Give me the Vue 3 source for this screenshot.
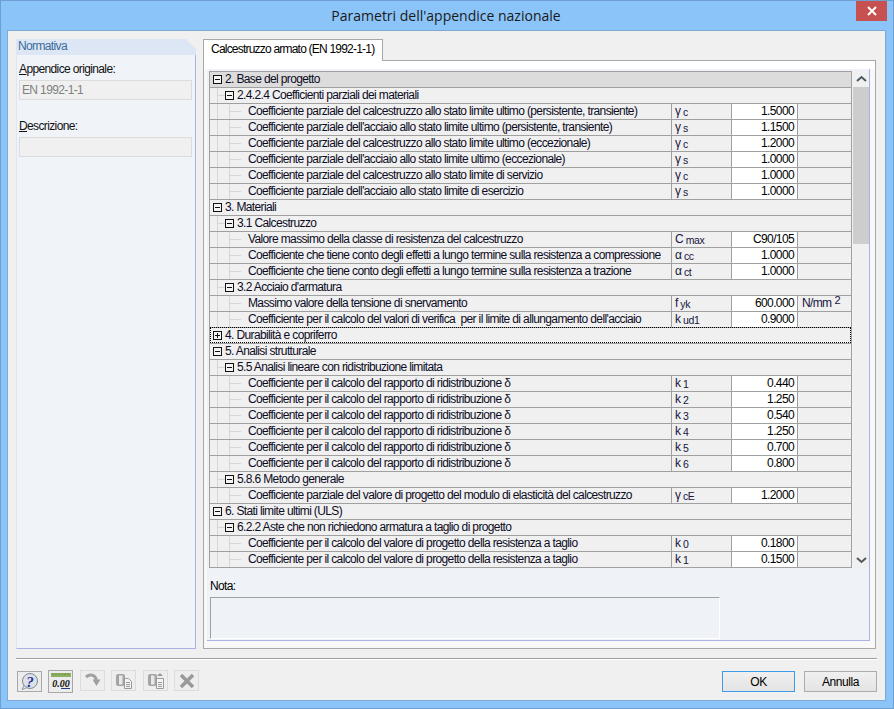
<script setup>
const h0 = (t, o = {}) => ({ lvl: 0, t, ...o })
const h1 = (t) => ({ lvl: 1, t })
const c = (t, s, sub, v, u) => ({ lvl: 2, t, s, sub, v, u })
const rd = 'Coefficiente per il calcolo del rapporto di ridistribuzione δ'
const vr = 'Coefficiente per il calcolo del valore di progetto della resistenza a taglio'
const rows = [
  h0('2. Base del progetto', { dark: true }),
  h1('2.4.2.4 Coefficienti parziali dei materiali'),
  c('Coefficiente parziale del calcestruzzo allo stato limite ultimo (persistente, transiente)', 'γ', 'c', '1.5000'),
  c("Coefficiente parziale dell'acciaio allo stato limite ultimo (persistente, transiente)", 'γ', 's', '1.1500'),
  c('Coefficiente parziale del calcestruzzo allo stato limite ultimo (eccezionale)', 'γ', 'c', '1.2000'),
  c("Coefficiente parziale dell'acciaio allo stato limite ultimo (eccezionale)", 'γ', 's', '1.0000'),
  c('Coefficiente parziale del calcestruzzo allo stato limite di servizio', 'γ', 'c', '1.0000'),
  c("Coefficiente parziale dell'acciaio allo stato limite di esercizio", 'γ', 's', '1.0000'),
  h0('3. Materiali'),
  h1('3.1 Calcestruzzo'),
  c('Valore massimo della classe di resistenza del calcestruzzo', 'C', 'max', 'C90/105'),
  c('Coefficiente che tiene conto degli effetti a lungo termine sulla resistenza a compressione', 'α', 'cc', '1.0000'),
  c('Coefficiente che tiene conto degli effetti a lungo termine sulla resistenza a trazione', 'α', 'ct', '1.0000'),
  h1("3.2 Acciaio d'armatura"),
  c('Massimo valore della tensione di snervamento', 'f', 'yk', '600.000', 'N/mm'),
  c("Coefficiente per il calcolo del valori di verifica  per il limite di allungamento dell'acciaio", 'k', 'ud1', '0.9000'),
  h0('4. Durabilità e copriferro', { closed: true, focus: true }),
  h0('5. Analisi strutturale'),
  h1('5.5 Analisi lineare con ridistribuzione limitata'),
  c(rd, 'k', '1', '0.440'),
  c(rd, 'k', '2', '1.250'),
  c(rd, 'k', '3', '0.540'),
  c(rd, 'k', '4', '1.250'),
  c(rd, 'k', '5', '0.700'),
  c(rd, 'k', '6', '0.800'),
  h1('5.8.6 Metodo generale'),
  c('Coefficiente parziale del valore di progetto del modulo di elasticità del calcestruzzo', 'γ', 'cE', '1.2000'),
  h0('6. Stati limite ultimi (ULS)'),
  h1('6.2.2 Aste che non richiedono armatura a taglio di progetto'),
  c(vr, 'k', '0', '0.1800'),
  c(vr, 'k', '1', '0.1500'),
]
</script>

<template>
  <div class="window">
    <header class="titlebar">
      <span class="title">Parametri dell'appendice nazionale</span>
      <button class="close" aria-label="Chiudi">
        <svg width="10" height="10" viewBox="0 0 10 10"><path d="M1 1l8 8M9 1l-8 8" stroke="#fff" stroke-width="2" /></svg>
      </button>
    </header>
    <div class="client">
      <div class="main">
        <aside class="side">
          <div class="side-head"><span>Normativa</span></div>
          <div class="side-body">
            <label class="lbl"><u>A</u>ppendice originale:</label>
            <div class="field">EN 1992-1-1</div>
            <label class="lbl lbl2"><u>D</u>escrizione:</label>
            <div class="field"></div>
          </div>
        </aside>
        <section class="tabs">
          <div class="tabstrip"><div class="tab">Calcestruzzo armato (EN 1992-1-1)</div></div>
          <div class="page">
            <div class="panel">
              <div class="grid-wrap">
                <div class="grid">
                  <div
                    v-for="(r, i) in rows"
                    :key="i"
                    class="row"
                    :class="{ dark: r.dark, focus: r.focus }"
                  >
                    <div class="name" :class="'lvl' + r.lvl">
                      <span v-if="r.lvl < 2" class="box" :class="{ closed: r.closed }"></span>
                      <span class="txt">{{ r.t }}</span>
                    </div>
                    <template v-if="r.lvl === 2">
                      <div class="sym"><span class="sym-m">{{ r.s }}</span><span class="sym-s">{{ r.sub }}</span></div>
                      <div class="val">{{ r.v }}</div>
                      <div class="unit"><template v-if="r.u">{{ r.u }}<span class="sup">2</span></template></div>
                    </template>
                  </div>
                </div>
                <div class="scroll">
                  <div class="sbtn"><svg width="11" height="8" viewBox="0 0 11 8"><path d="M1 6l4.500-4L10 6" fill="none" stroke="#505860" stroke-width="2" /></svg></div>
                  <div class="thumb"></div>
                  <div class="strack"></div>
                  <div class="sbtn"><svg width="11" height="8" viewBox="0 0 11 8"><path d="M1 2l4.500 4L10 2" fill="none" stroke="#505860" stroke-width="2" /></svg></div>
                </div>
              </div>
              <div class="nota-lbl">Nota:</div>
              <div class="nota"></div>
            </div>
          </div>
        </section>
      </div>
      <div class="sep"></div>
      <footer class="foot">
        <div class="tools">
          <button class="tool" aria-label="Aiuto">
            <svg width="21" height="18" viewBox="0 0 21 18">
              <circle cx="11" cy="8" r="7.500" fill="#dde2e8" stroke="#7f8a96" />
              <path d="M5 12.500L3 16.500l5.500-2z" fill="#dde2e8" stroke="#7f8a96" stroke-width=".8" />
              <text x="11" y="13.500" text-anchor="middle" class="qm">?</text>
            </svg>
          </button>
          <button class="tool raised" aria-label="Unità">
            <svg width="22" height="19" viewBox="0 0 22 19">
              <rect x="1" y="1" width="20" height="4" fill="#8db060" />
              <path d="M3 1v2M6 1v2M9 1v2M12 1v2M15 1v2M18 1v2" stroke="#6a9040" />
              <text x="11" y="14.500" text-anchor="middle" class="num">0.00</text>
              <path d="M11 16.500h9" stroke="#223a88" />
            </svg>
          </button>
          <button class="tool off" aria-label="Ripristina">
            <svg width="20" height="18" viewBox="0 0 20 18">
              <path d="M3 5c4-3.500 9-2.500 10.500 3" fill="none" stroke="#a0a0a0" stroke-width="3" />
              <path d="M9.500 7.500h8L13.500 14z" fill="#a0a0a0" />
            </svg>
          </button>
          <button class="tool off" aria-label="Importa">
            <svg width="20" height="18" viewBox="0 0 20 18">
              <rect x="2" y="2" width="9" height="12" rx="2" fill="#a4a4a4" />
              <rect x="5" y="3.500" width="3.500" height="9" fill="#e8e8e8" />
              <path d="M10.500 6.500h4l3 3v7h-7z" fill="#f4f4f4" stroke="#9a9a9a" />
              <path d="M12 10.500h4M12 12.500h4M12 14.500h4" stroke="#9a9a9a" />
            </svg>
          </button>
          <button class="tool off" aria-label="Esporta">
            <svg width="20" height="18" viewBox="0 0 20 18">
              <rect x="2" y="2" width="9" height="12" rx="2" fill="#a4a4a4" />
              <rect x="5" y="3.500" width="3.500" height="9" fill="#e8e8e8" />
              <path d="M10.500 6.500h7v10h-7z" fill="#f4f4f4" stroke="#9a9a9a" />
              <path d="M12 10.500h4M12 12.500h4M12 14.500h4" stroke="#9a9a9a" />
              <path d="M14 1l3 3h-6z" fill="#9a9a9a" />
            </svg>
          </button>
          <button class="tool off" aria-label="Elimina">
            <svg width="20" height="18" viewBox="0 0 20 18">
              <path d="M4 3l12 12M16 3L4 15" stroke="#9a9a9a" stroke-width="3.500" />
            </svg>
          </button>
        </div>
        <div class="actions">
          <button class="btn default">OK</button>
          <button class="btn">Annulla</button>
        </div>
      </footer>
    </div>
  </div>
</template>

<style>
html, body { margin: 0; padding: 0; }
</style>

<style scoped>
* { box-sizing: border-box; }
.window {
  width: 894px;
  height: 709px;
  background: #8bc4f8;
  border: 1px solid #6f9fd0;
  display: flex;
  flex-direction: column;
  font-family: "Liberation Sans", Arial, sans-serif;
  font-size: 12px;
  letter-spacing: -0.63px;
  color: #000;
  overflow: hidden;
}
.titlebar {
  height: 29px;
  flex: none;
  display: flex;
  justify-content: center;
  position: relative;
  padding-right: 2px;
}
.title {
  font-family: "Open Sans", "Noto Sans", sans-serif;
  font-size: 14px;
  letter-spacing: 0;
  line-height: 30px;
  color: #1a1a1a;
}
.close {
  position: absolute;
  right: 6px;
  top: 0;
  width: 31px;
  height: 20px;
  background: #c75050;
  border: 0;
  padding: 0;
  display: flex;
  align-items: center;
  justify-content: center;
}
.client {
  flex: 1;
  margin: 0 7px 7px 6px;
  background: #f0f0f0;
  border: 1px solid #7fa8d2;
  padding: 8px 8px 0 8px;
  display: flex;
  flex-direction: column;
}
.main {
  height: 610px;
  flex: none;
  display: flex;
  gap: 7px;
}
.side {
  width: 180px;
  flex: none;
  display: flex;
  flex-direction: column;
}
.side-head {
  height: 16px;
  background: #dce6f4;
  clip-path: polygon(0 0, 170px 0, 180px 10px, 180px 16px, 0 16px);
  padding-left: 2px;
  line-height: 15px;
  color: #3b6c9b;
}
.side-body {
  flex: 1;
  background: #f0f4f9;
  border: 1px solid #a9b2e6;
  border-top: 0;
  border-left-color: #dfe6f2;
  padding: 7px 3px 0 2px;
}
.lbl {
  display: block;
  height: 14px;
  line-height: 14px;
  margin-bottom: 4px;
  color: #111;
}
.lbl2 { margin-top: 19px; }
.field {
  height: 20px;
  background: #f0f0f0;
  border: 1px solid #dcdcdc;
  line-height: 18px;
  padding-left: 2px;
  color: #808080;
}
.tabs {
  flex: 1;
  display: flex;
  flex-direction: column;
  min-width: 0;
}
.tabstrip { height: 22px; flex: none; display: flex; }
.tab {
  width: 180px;
  height: 22px;
  background: #fff;
  border: 1px solid #a8a8a8;
  border-bottom: 0;
  padding-left: 7px;
  line-height: 19px;
  letter-spacing: -0.79px;
  white-space: nowrap;
  position: relative;
  z-index: 1;
}
.page {
  flex: 1;
  margin-top: -1px;
  width: 673px;
  border: 1px solid #a8a8a8;
  background: #f8f8f8;
  padding: 8px 5px 7px 3px;
  box-shadow: inset 0 8px 0 #fff;
}
.panel {
  height: 572px;
  background: #eff3f8;
  border-right: 1px solid #a9b2e6;
  border-bottom: 1px solid #a9b2e6;
  padding: 2px 0 0 2px;
  display: flex;
  flex-direction: column;
}
.grid-wrap { display: flex; height: 497px; flex: none; }
.grid {
  width: 643px;
  flex: none;
  background: #f0f0f0;
  border-top: 1px solid #a0a0a0;
  border-left: 1px solid #a0a0a0;
  border-right: 1px solid #a0a0a0;
}
.row {
  display: flex;
  height: 16px;
  border-bottom: 1px solid #a0a0a0;
  position: relative;
  white-space: pre;
}
.row.dark { background: #dcdcdc; }
.row.focus::after {
  content: "";
  position: absolute;
  inset: -1px 0 0 0;
  border: 1px dotted #000;
  pointer-events: none;
}
.name {
  width: 461px;
  flex: none;
  display: flex;
  align-items: center;
  line-height: 15px;
  color: #0c0c24;
  background-repeat: no-repeat;
}
.lvl0, .lvl1 { flex: 1; width: auto; }
.lvl0 { padding-left: 3px; }
.lvl1 {
  padding-left: 15px;
  background-image:
    linear-gradient(#d6d6d6, #d6d6d6),
    linear-gradient(#d6d6d6, #d6d6d6);
  background-size: 1px 16px, 8px 1px;
  background-position: 7px 0, 7px 7px;
}
.lvl2 {
  padding-left: 38px;
  background-image:
    linear-gradient(#d6d6d6, #d6d6d6),
    linear-gradient(#d6d6d6, #d6d6d6),
    linear-gradient(#d6d6d6, #d6d6d6);
  background-size: 1px 16px, 1px 16px, 12px 1px;
  background-position: 7px 0, 19px 0, 19px 7px;
}
.box {
  width: 9px;
  height: 9px;
  flex: none;
  border: 1px solid #111;
  background:
    linear-gradient(#111, #111) center / 5px 1px no-repeat,
    #f4f4f4;
  margin-right: 3px;
}
.box.closed {
  background:
    linear-gradient(#111, #111) center / 5px 1px no-repeat,
    linear-gradient(#111, #111) center / 1px 5px no-repeat,
    #f4f4f4;
}
.sym, .val, .unit { border-left: 1px solid #a0a0a0; height: 15px; flex: none; line-height: 15px; }
.sym { width: 60px; padding-left: 3px; color: #16163e; }
.sym-m { font-size: 12px; letter-spacing: 0; }
.sym-s { font-size: 10.5px; margin-left: 2px; position: relative; top: 1px; letter-spacing: -0.4px; }
.val {
  width: 66px;
  background: #fff;
  text-align: right;
  padding-right: 3px;
}
.unit { flex: 1; padding-left: 4px; color: #16163e; }
.sup { font-size: 11px; margin-left: 3px; position: relative; top: -3px; }
.scroll {
  width: 16px;
  margin-left: 1px;
  flex: none;
  display: flex;
  flex-direction: column;
  background: #f0f0f0;
}
.sbtn { height: 16px; flex: none; display: flex; align-items: center; justify-content: center; }
.thumb { height: 157px; flex: none; background: #cdcdcd; }
.strack { flex: 1; }
.nota-lbl { margin-top: 11px; height: 14px; line-height: 14px; padding-left: 1px; margin-bottom: 4px; }
.nota {
  width: 510px;
  margin-left: 1px;
  height: 42px;
  border-top: 1px solid #a0a0a0;
  border-left: 1px solid #a0a0a0;
  border-right: 1px solid #fff;
  border-bottom: 1px solid #fff;
}
.sep {
  height: 2px;
  margin-top: 9px;
  border-top: 1px solid #a0a0a0;
  border-bottom: 1px solid #fff;
  flex: none;
}
.foot {
  display: flex;
  justify-content: space-between;
  padding-top: 11px;
  padding-left: 1px;
}
.tools { display: flex; gap: 6px; }
.tool {
  width: 25px;
  height: 21px;
  padding: 0;
  background: #ececec;
  border: 1px solid #a8a8a8;
  display: flex;
  align-items: center;
  justify-content: center;
}
.tool.raised { height: 23px; margin-top: -1px; }
.tool.off { background: #eeeeee; border-color: #dcdcdc; height: 21px; margin-top: -1px; }
.tool.off svg { filter: blur(0.4px); }
.tool:nth-child(3), .tool:nth-child(5) { margin-left: 1px; }
.qm { font: italic bold 15px "Liberation Serif", serif; fill: #20309a; }
.num { font: italic bold 10px "Liberation Serif", serif; fill: #111; }
.actions { display: flex; gap: 9px; }
.btn {
  width: 73px;
  height: 21px;
  padding: 0;
  background: linear-gradient(#f0f0f0, #e4e4e4);
  border: 1px solid #acacac;
  font: 12px "Liberation Sans", Arial, sans-serif;
  letter-spacing: -0.4px;
  color: #000;
}
.btn.default { border-color: #3d9be9; }
</style>
